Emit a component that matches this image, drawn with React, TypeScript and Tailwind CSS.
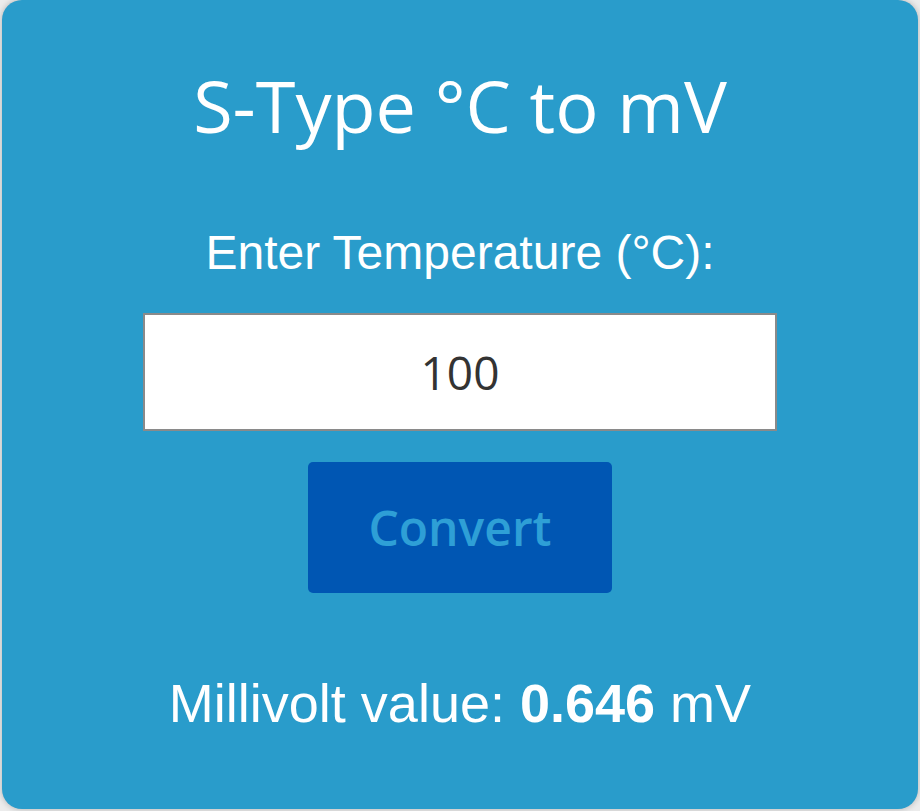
import React, { useState } from 'react';

// Type S thermocouple (Pt-10%Rh / Pt) polynomial, 0..1064.18 °C, ITS-90
const S_COEFFS = [
  0.0, 5.40313308631e-3, 1.2593428974e-5, -2.32477968689e-8, 3.22028823036e-11,
  -3.31465196389e-14, 2.55744251786e-17, -1.25068871393e-20, 2.71443176145e-24,
];

const celsiusToMv = (t: number) =>
  S_COEFFS.reduce((sum, c, i) => sum + c * Math.pow(t, i), 0);

const App: React.FC = () => {
  const [temp, setTemp] = useState('100');
  const [result, setResult] = useState<string>(celsiusToMv(100).toFixed(3));

  const handleConvert = () => {
    const t = parseFloat(temp);
    if (!isNaN(t)) setResult(celsiusToMv(t).toFixed(3));
  };

  return (
    <div className="min-h-screen bg-[#ececec] flex justify-center">
      <div className="w-[916px] h-[809px] bg-[#299ccb] rounded-[20px] shadow-[0_0_6px_rgba(0,0,0,0.25)] flex flex-col items-center text-white">
        {/* Title */}
        <h1 className="mt-[57px] text-[72px] leading-[96px] font-normal font-['Open_Sans',sans-serif]">
          S-Type °C to mV
        </h1>

        {/* Temperature input */}
        <label
          htmlFor="temp"
          className="mt-[70px] text-[48px] leading-[60px] font-['Liberation_Sans',Arial,sans-serif]"
        >
          Enter Temperature (°C):
        </label>
        <input
          id="temp"
          type="text"
          value={temp}
          onChange={(e) => setTemp(e.target.value)}
          className="mt-[30px] w-[634px] h-[118px] bg-white border-2 border-[#8a8a8a] text-center text-[#333] text-[46px] font-['Open_Sans',sans-serif] outline-none"
        />

        {/* Convert button */}
        <button
          onClick={handleConvert}
          className="mt-[31px] w-[304px] h-[131px] rounded-[5px] bg-[#0056b3] text-[#2e9fd6] text-[48px] font-semibold font-['Open_Sans',sans-serif] cursor-pointer"
        >
          Convert
        </button>

        {/* Result */}
        <p className="mt-[78px] text-[54px] leading-[64px] font-['Liberation_Sans',Arial,sans-serif]">
          Millivolt value: <strong className="font-bold">{result}</strong> mV
        </p>
      </div>
    </div>
  );
};

export default App;
